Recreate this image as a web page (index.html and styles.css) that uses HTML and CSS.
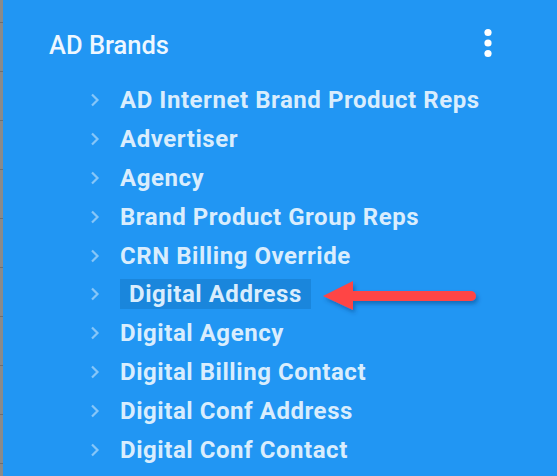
FILE: index.html
```html
<!DOCTYPE html>
<html>
<head>
<meta charset="utf-8">
<link rel="stylesheet" href="styles.css">
</head>
<body>
<div class="panel">
  <div class="header">
    <span class="title">AD Brands</span>
    <svg class="dots" width="8" height="30" viewBox="0 0 8 30"><circle cx="4" cy="4.5" r="3.6"/><circle cx="4" cy="15" r="3.6"/><circle cx="4" cy="25.5" r="3.6"/></svg>
  </div>
  <ul class="list">
    <li class="row"><svg class="chev" width="10" height="14" viewBox="0 0 10 14"><path d="M2 1.5 L7.5 7 L2 12.5"/></svg><span class="label">AD Internet Brand Product Reps</span></li>
    <li class="row"><svg class="chev" width="10" height="14" viewBox="0 0 10 14"><path d="M2 1.5 L7.5 7 L2 12.5"/></svg><span class="label">Advertiser</span></li>
    <li class="row"><svg class="chev" width="10" height="14" viewBox="0 0 10 14"><path d="M2 1.5 L7.5 7 L2 12.5"/></svg><span class="label">Agency</span></li>
    <li class="row"><svg class="chev" width="10" height="14" viewBox="0 0 10 14"><path d="M2 1.5 L7.5 7 L2 12.5"/></svg><span class="label">Brand Product Group Reps</span></li>
    <li class="row"><svg class="chev" width="10" height="14" viewBox="0 0 10 14"><path d="M2 1.5 L7.5 7 L2 12.5"/></svg><span class="label">CRN Billing Override</span></li>
    <li class="row"><svg class="chev" width="10" height="14" viewBox="0 0 10 14"><path d="M2 1.5 L7.5 7 L2 12.5"/></svg><span class="label selected">Digital Address</span></li>
    <li class="row"><svg class="chev" width="10" height="14" viewBox="0 0 10 14"><path d="M2 1.5 L7.5 7 L2 12.5"/></svg><span class="label">Digital Agency</span></li>
    <li class="row"><svg class="chev" width="10" height="14" viewBox="0 0 10 14"><path d="M2 1.5 L7.5 7 L2 12.5"/></svg><span class="label">Digital Billing Contact</span></li>
    <li class="row"><svg class="chev" width="10" height="14" viewBox="0 0 10 14"><path d="M2 1.5 L7.5 7 L2 12.5"/></svg><span class="label">Digital Conf Address</span></li>
    <li class="row"><svg class="chev" width="10" height="14" viewBox="0 0 10 14"><path d="M2 1.5 L7.5 7 L2 12.5"/></svg><span class="label">Digital Conf Contact</span></li>
  </ul>
  <svg class="arrow" width="170" height="44" viewBox="0 0 170 44">
    <defs>
      <filter id="sh" x="-10%" y="-30%" width="130%" height="180%">
        <feDropShadow dx="2" dy="3" stdDeviation="2" flood-color="#0a3a78" flood-opacity="0.45"/>
      </filter>
    </defs>
    <g filter="url(#sh)" fill="#ff4545">
      <rect x="30" y="15" width="127" height="10" rx="5"/>
      <path d="M4 20 L34 5 L34 34 Z"/>
    </g>
  </svg>
</div>
</body>
</html>
```

FILE: styles.css
```css
html, body {
  margin: 0;
  padding: 0;
}
body {
  width: 557px;
  height: 476px;
  overflow: hidden;
  background: #2196f3;
  font-family: Roboto, "Liberation Sans", sans-serif;
}
.panel {
  position: relative;
  height: 476px;
  box-sizing: border-box;
  padding-top: 20px;
  border-left: 3px solid #8a8a8a;
  border-image: repeating-linear-gradient(to bottom, #8a8a8a 0, #8a8a8a 22px, #6f6f6f 22px, #6f6f6f 23px, #8a8a8a 23px, #8a8a8a 49px) 0 0 0 3 / 0 0 0 3px;
}
.header {
  height: 49px;
  display: flex;
  align-items: center;
  justify-content: space-between;
  padding: 0 65px 0 46px;
}
.title {
  font-size: 25.5px;
  font-weight: 500;
  color: #eef7ff;
  letter-spacing: 0;
}
.dots {
  fill: #ffffff;
  margin-top: -3px;
}
.list {
  list-style: none;
  margin: 12px 0 0 0;
  padding: 0 0 0 87px;
}
.row {
  height: 38.8px;
  display: flex;
  align-items: center;
}
.chev {
  fill: none;
  stroke: #86c6f8;
  stroke-width: 2.2;
  margin-right: 20px;
  flex: none;
}
.label {
  font-size: 24px;
  font-weight: 700;
  color: #d9edfd;
  line-height: 30px;
  letter-spacing: 0.55px;
}
.selected {
  background: #1a86dc;
  padding: 0 9px;
}
.arrow {
  position: absolute;
  left: 316px;
  top: 276px;
}
```
